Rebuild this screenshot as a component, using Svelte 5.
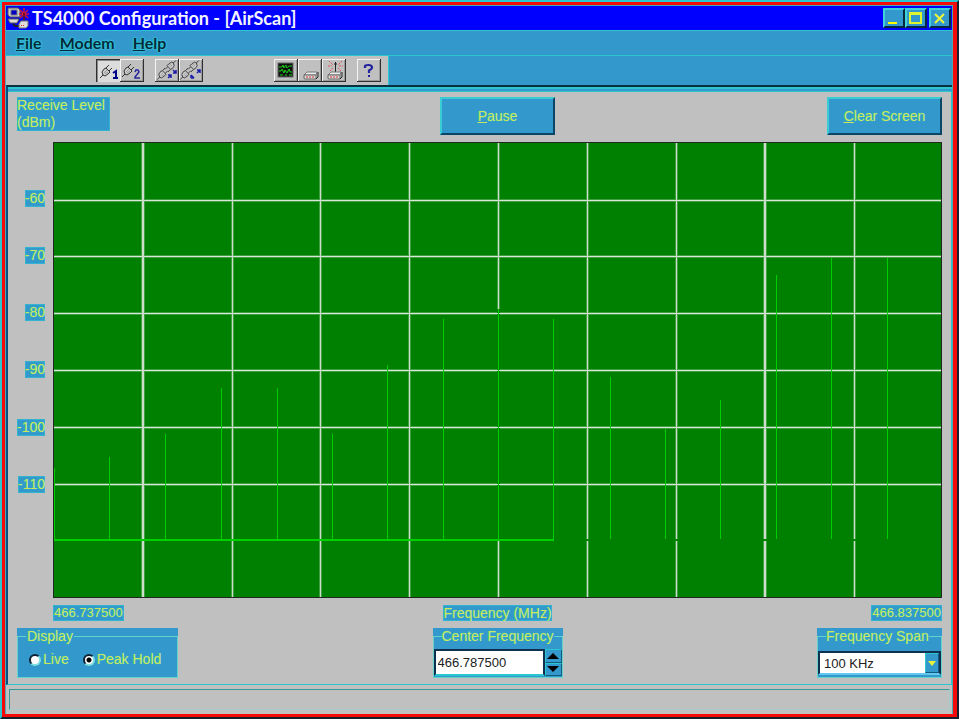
<script>
  const levels = [-60, -70, -80, -90, -100, -110];

  const gridRows = [58, 114, 171, 228, 285, 342];
  const gridColumns = [89, 179, 267, 356, 445, 534, 623, 711, 801];
  const wideColumns = [89, 711];

  const signals = [
    { x: 1, top: 326 },
    { x: 56, top: 315 },
    { x: 112, top: 292 },
    { x: 168, top: 246 },
    { x: 224, top: 246 },
    { x: 279, top: 292 },
    { x: 334, top: 223 },
    { x: 390, top: 177 },
    { x: 445, top: 167 },
    { x: 500, top: 177 },
    { x: 557, top: 235 },
    { x: 612, top: 287 },
    { x: 667, top: 258 },
    { x: 723, top: 133 },
    { x: 778, top: 116 },
    { x: 834, top: 116 },
    { x: 888, top: 235 }
  ];

  const baseline = 398;
  const sweepEnd = 501;

  let display = $state('peak');
  let centerFrequency = $state('466.787500');
  let span = $state('100 KHz');
  let port = $state(1);
  let paused = $state(false);
  let cleared = $state(false);

  function step(amount) {
    centerFrequency = (Number(centerFrequency) + amount).toFixed(6);
  }
</script>

{#snippet plug()}
  <path d="M0 13 L3 10 M6 3 L9 0 M9 6 L12 3 M4 4 L9 8" fill="none" stroke="#333" />
  <path d="M3 10 L2 7 L4 4 L6 3 L10 7 L8 9 L5 11 Z" fill="#cfcfcf" stroke="#333" />
  <path d="M4 8 L7 5 M5 9 L8 7" stroke="#999" />
{/snippet}

{#snippet modem()}
  <path d="M6 16 L9 13 H19 L18 16 Z" fill="#ededed" stroke="#777" />
  <path d="M6 16 H18 V20 H7 Q6 20 6 19 Z" fill="#d8d8d8" stroke="#666" />
  <path d="M18 20 L20 18 V13" fill="none" stroke="#222" />
  <path d="M8 18 H10 M11 18 H13 M14 18 H16" stroke="#d33" />
{/snippet}

<div class="window">
  <div class="frame">
    <header class="title-bar">
      <svg class="app-icon" width="22" height="22" viewBox="0 0 22 22" aria-hidden="true">
        <path d="M1 1 H11 L13 3 V10 H3 L1 8 Z" fill="#ccc" stroke="#555" />
        <rect x="4" y="3" width="6" height="5" fill="#0000c8" stroke="#777" />
        <path d="M1 12 H12 L10 16 H3 Z" fill="#ddd" stroke="#555" />
        <path d="M6 17 L8 19 H12" fill="none" stroke="#222" stroke-width="2" />
        <path d="M17 1 V13 M13 3 L21 11 M21 3 L13 11 M12 7 H22" stroke="#d01838" stroke-width="1.5" />
        <path d="M17 6 V15" stroke="#111" />
        <path d="M12 17 L14 14 H21 V19 L19 21 H12 Z" fill="#ddd" stroke="#777" />
        <path d="M14 18.5 H18" stroke="#d33" stroke-dasharray="1 1" />
      </svg>
      <h1>TS4000 Configuration - [AirScan]</h1>
      <div class="window-controls">
        <button class="window-button" aria-label="Minimize">
          <svg width="17" height="16" viewBox="0 0 17 16"><path d="M3 13 H12" stroke="#ff0" stroke-width="2" /></svg>
        </button>
        <button class="window-button" aria-label="Maximize">
          <svg width="17" height="16" viewBox="0 0 17 16">
            <path d="M3 3 H14 V13 H3 Z M3 4 H14" fill="none" stroke="#dff52c" stroke-width="2" />
          </svg>
        </button>
        <button class="window-button close" aria-label="Close">
          <svg width="17" height="16" viewBox="0 0 17 16"><path d="M4 4 L13 13 M13 4 L4 13" stroke="#ecf53c" stroke-width="2" /></svg>
        </button>
      </div>
    </header>

    <nav class="menu-bar">
      <button><u>F</u>ile</button>
      <button><u>M</u>odem</button>
      <button><u>H</u>elp</button>
    </nav>

    <div class="toolbar-row">
      <div class="toolbar">
        <div class="tool-group ports">
          <button class="tool" class:pressed={port === 1} aria-label="Port 1" onclick={() => (port = 1)}>
            <svg width="24" height="23" viewBox="0 0 24 23">
              <g transform="translate(4 6)">{@render plug()}</g>
              <path d="M17 14 L20 12 V19 M17 19 H22" fill="none" stroke="#00008b" stroke-width="2" />
            </svg>
          </button>
          <button class="tool" class:pressed={port === 2} aria-label="Port 2" onclick={() => (port = 2)}>
            <svg width="24" height="23" viewBox="0 0 24 23">
              <g transform="translate(2 5)">{@render plug()}</g>
              <path d="M15 13 L16 11 H18 L19 13 L15 18 V19 H20" fill="none" stroke="#2525a0" stroke-width="1.5" />
            </svg>
          </button>
        </div>
        <div class="tool-group links">
          <button class="tool" aria-label="Connect">
            <svg width="24" height="23" viewBox="0 0 24 23">
              <g transform="translate(2 9) scale(0.9)">{@render plug()}</g>
              <g transform="translate(21 1) rotate(180) translate(0 -12) scale(0.9)">{@render plug()}</g>
              <path d="M13 19 L16 16 M13 16 H16 V19 M18 11 L21 14 M21 11 V14 H18" fill="none" stroke="#1c1ca8" stroke-width="1.5" />
            </svg>
          </button>
          <button class="tool" aria-label="Disconnect">
            <svg width="24" height="23" viewBox="0 0 24 23">
              <g transform="translate(1 9) scale(0.9)">{@render plug()}</g>
              <g transform="translate(20 1) rotate(180) translate(0 -12) scale(0.9)">{@render plug()}</g>
              <path d="M12 16 L15 19 M12 19 H15 M12 16 V19 M18 14 L21 11 M18 11 H21 V14" fill="none" stroke="#1c1ca8" stroke-width="1.5" />
            </svg>
          </button>
        </div>
        <div class="tool-group devices">
          <button class="tool" aria-label="AirScan">
            <svg width="24" height="23" viewBox="0 0 24 23">
              <rect x="4" y="4" width="15" height="14" fill="#111" stroke="#666" />
              <path d="M5 8 H8 L9 6 L10 9 L12 6 L13 9 L15 7 H18 M5 12 H7 L8 10 L10 14 L11 11 L13 14 L15 10 L16 13 H18 M6 16 H9 M11 16 H13 M15 16 H18" fill="none" stroke="#16d016" />
            </svg>
          </button>
          <button class="tool" aria-label="Local modem">
            <svg width="24" height="23" viewBox="0 0 24 23">{@render modem()}</svg>
          </button>
          <button class="tool" aria-label="Remote modem">
            <svg width="24" height="23" viewBox="0 0 24 23">
              <path d="M7 2 L11 6 M20 2 L16 6 M6 7 H10 M17 7 H21 M8 12 L11 9 M19 12 L16 9" stroke="#dd5555" stroke-dasharray="2 1" />
              <path d="M13.5 3 V14 M12 5 H15" stroke="#222" />
              {@render modem()}
            </svg>
          </button>
        </div>
        <div class="tool-group">
          <button class="tool" aria-label="About">
            <svg width="24" height="23" viewBox="0 0 24 23">
              <path d="M8 9 V7 Q8 6 11.5 6 Q15 6 15 8.5 Q15 10 12 11.5 V14 M11 17 H13" fill="none" stroke="#2222a0" stroke-width="2.2" />
            </svg>
          </button>
        </div>
      </div>
    </div>

    <main>
      <div class="edge"></div>
      <div class="scan">
        <div class="tag receive-level">Receive Level<br />(dBm)</div>
        <button class="action pause" onclick={() => (paused = !paused)}><span><u>P</u>ause</span></button>
        <button class="action clear" onclick={() => (cleared = true)}><span><u>C</u>lear Screen</span></button>

        <div class="levels">
          {#each levels as level}
            <span class="tag">{level}</span>
          {/each}
        </div>

        <svg class="chart" viewBox="0 0 889 456" preserveAspectRatio="none" role="img" aria-label="Receive level by frequency">
          <rect width="889" height="456" fill="#008000" />
          {#each gridColumns as x}
            <rect x={x - 1} y="0" width={wideColumns.includes(x) ? 4 : 3} height="456" fill="#409f40" />
          {/each}
          {#each gridRows as y}
            <rect x="0" y={y - 1} width="889" height="3" fill="#409f40" />
            <rect x="0" {y} width="889" height="1" fill="#d8e8d8" />
          {/each}
          {#each gridColumns as x}
            <rect {x} y="0" width={wideColumns.includes(x) ? 2 : 1} height="456" fill="#ccdecb" />
          {/each}
          <rect x="0" y={baseline - 1} width="889" height="2" fill="#008000" />
          {#if !cleared}
            {#each signals as signal}
              {#if gridColumns.includes(signal.x)}
                <rect x={signal.x - 1} y={signal.top} width="3" height={baseline - signal.top} fill="#008000" />
                {#each gridRows.filter((y) => y > signal.top) as y}
                  <rect x={signal.x - 1} {y} width="3" height="1" fill="#d8e8d8" />
                {/each}
              {/if}
              <rect x={signal.x} y={signal.top} width="1" height={baseline - signal.top - 1} fill="#00cc00" />
            {/each}
            <rect x="0" y={baseline - 1} width={sweepEnd} height="2" fill="#00d000" />
          {/if}
          <path d="M0.5 456 V0.5 H888.5 V455.5 H0" fill="none" stroke="#202820" />
        </svg>

        <span class="tag frequency start">466.737500</span>
        <span class="tag axis-name">Frequency (MHz)</span>
        <span class="tag frequency end">466.837500</span>

        <div class="panel display">
          <fieldset>
            <legend>Display</legend>
            <div class="choices">
              <label><input type="radio" name="display" value="live" bind:group={display} />Live</label>
              <label><input type="radio" name="display" value="peak" bind:group={display} />Peak Hold</label>
            </div>
          </fieldset>
        </div>

        <div class="panel center-frequency">
          <fieldset>
            <legend><label for="center">Center Frequency</label></legend>
            <div class="spinner">
              <input id="center" type="text" bind:value={centerFrequency} />
              <div class="steps">
                <button aria-label="Increase" onclick={() => step(0.0125)}>
                  <svg width="12" height="6" viewBox="0 0 12 6"><path d="M0 6 L6 0 L12 6 Z" /></svg>
                </button>
                <button aria-label="Decrease" onclick={() => step(-0.0125)}>
                  <svg width="12" height="6" viewBox="0 0 12 6"><path d="M0 0 L6 6 L12 0 Z" /></svg>
                </button>
              </div>
            </div>
          </fieldset>
        </div>

        <div class="panel span">
          <fieldset>
            <legend><label for="span">Frequency Span</label></legend>
            <div class="picker">
              <select id="span" bind:value={span}>
                <option>100 KHz</option>
                <option>200 KHz</option>
                <option>500 KHz</option>
              </select>
              <span class="arrow" aria-hidden="true">
                <svg width="8" height="5" viewBox="0 0 8 5"><path d="M0 0 H8 L4 5 Z" fill="#e6f53c" /></svg>
              </span>
            </div>
          </fieldset>
        </div>
      </div>
    </main>

    <footer><div class="status"></div></footer>
  </div>
</div>

<style>
  :global(body) {
    margin: 0;
  }

  .window {
    --blue: #3399cc;
    --cyan: #2cc6d0;
    --grey: #c0c0c0;
    --ink: #cbe65c;
    --glow: 0 0 1px #30d8c8;
    display: flex;
    min-height: 100vh;
    box-sizing: border-box;
    border: 2px solid;
    border-color: #2cc6d0 #14202c #14202c #2cc6d0;
    background: #f50a0a;
    font: 14px/17px "Liberation Sans", Arial, sans-serif;
  }

  button, input, select {
    box-sizing: border-box;
    margin: 0;
    font: inherit;
    color: inherit;
    border-radius: 0;
  }

  svg {
    display: block;
    flex: none;
  }

  .frame {
    display: flex;
    flex-direction: column;
    flex: 1;
    min-width: 0;
    margin: 3px 4px 3px 3px;
    border: 1px solid #4ba9b4;
    border-bottom: none;
    background: var(--grey);
  }

  .title-bar {
    display: flex;
    align-items: center;
    height: 24px;
    background: #0000ff;
    color: #f4f4ff;
  }

  .app-icon {
    margin: 0 3px 0 1px;
  }

  h1 {
    flex: 1;
    margin: 0;
    font: bold 18px/24px Lato, sans-serif;
  }

  .window-controls {
    display: flex;
    padding-right: 1px;
  }

  .window-button {
    width: 22px;
    height: 20px;
    padding: 0;
    border: 2px solid;
    border-color: #3fd3d8 #06283c #06283c #3fd3d8;
    background: var(--blue);
  }

  .close {
    margin-left: 2px;
  }

  .menu-bar {
    display: flex;
    gap: 18px;
    box-sizing: border-box;
    height: 26px;
    padding-left: 10px;
    border-top: 1px solid var(--cyan);
    border-bottom: 1px solid var(--cyan);
    background: var(--blue);
    color: #06283c;
  }

  .menu-bar button {
    padding: 0;
    border: none;
    background: none;
    font: bold 16px/24px Lato, sans-serif;
    text-shadow: 0 0 2px #30e0dc, 0 0 2px #30e0dc;
  }

  .toolbar-row {
    display: flex;
    height: 29px;
    background: var(--blue);
  }

  .toolbar {
    display: flex;
    align-items: center;
    padding: 0 7px 0 90px;
    border-right: 1px solid var(--cyan);
    background: var(--grey);
  }

  .tool-group {
    display: flex;
  }

  .ports, .devices {
    margin-right: 11px;
  }

  .links {
    margin-right: 71px;
  }

  .tool {
    width: 24px;
    height: 23px;
    padding: 0;
    border: none;
    background: var(--grey);
    box-shadow: inset -1px -1px #303030, inset 1px 1px #f4f4f4, inset -2px -2px #999;
  }

  .tool.pressed {
    background: #dcdcdc;
    box-shadow: inset 1px 1px #303030, inset 2px 2px #888;
  }

  main {
    display: flex;
    flex-direction: column;
    flex: 1;
    border-top: 2px solid #0a2f40;
    border-left: 2px solid #075080;
    border-bottom: 1px solid var(--cyan);
  }

  .edge {
    height: 2px;
    border-top: 2px solid var(--cyan);
    border-bottom: 1px solid var(--cyan);
    background: var(--blue);
  }

  .scan {
    display: grid;
    grid-template-columns: 36px minmax(0, 1fr) auto minmax(0, 1fr);
    grid-template-rows: auto minmax(240px, 1fr) auto auto;
    row-gap: 7px;
    flex: 1;
    padding: 5px 9px 6px;
    border-right: 1px solid var(--cyan);
  }

  .tag {
    background: var(--blue);
    color: var(--ink);
    box-shadow: inset 0 0 0 1px #30b4d0;
    text-shadow: var(--glow);
  }

  .receive-level {
    grid-column: 1 / 3;
    justify-self: start;
    align-self: start;
    padding-right: 5px;
  }

  .action {
    justify-self: center;
    width: 115px;
    height: 38px;
    padding: 0;
    border: 2px solid;
    border-color: #38ccd4 #0a4668 #0a4668 #38ccd4;
    background: var(--blue);
    color: var(--ink);
    text-shadow: var(--glow);
  }

  .clear {
    justify-self: end;
  }

  .levels {
    display: grid;
    grid-template-rows: repeat(7, 1fr);
    align-items: center;
    justify-items: end;
    padding: 28px 9px 28px 0;
  }

  .chart {
    grid-column: 2 / -1;
    width: 100%;
    height: 100%;
    min-height: 0;
    contain: size;
    shape-rendering: crispEdges;
  }

  .frequency {
    padding: 0 1px;
    font-size: 13px;
    line-height: 16px;
  }

  .start {
    grid-column: 2;
    justify-self: start;
  }

  .axis-name {
    justify-self: center;
    line-height: 16px;
  }

  .end {
    justify-self: end;
  }

  .panel {
    display: flex;
    height: 50px;
    background: var(--blue);
    color: var(--ink);
    text-shadow: var(--glow);
  }

  fieldset {
    flex: 1;
    min-width: 0;
    margin: 0;
    padding: 0;
    border: 1px solid #62d4cc;
  }

  legend {
    margin-left: 8px;
    padding: 0 1px;
    line-height: 16px;
  }

  .display {
    grid-column: 1 / 3;
    justify-self: start;
    width: 161px;
  }

  .choices {
    display: flex;
    gap: 14px;
    padding: 7px 0 0 11px;
  }

  .choices label {
    display: flex;
    align-items: center;
    gap: 2px;
  }

  .choices input {
    appearance: none;
    width: 12px;
    height: 12px;
    border: 2px solid;
    border-color: #123 #7fe0e0 #7fe0e0 #123;
    border-radius: 50%;
    background: #fff;
  }

  .choices input:checked {
    background: radial-gradient(circle, #000 0 2px, #fff 3px);
  }

  .center-frequency {
    width: 130px;
  }

  .spinner, .picker {
    display: flex;
    color: #202020;
    text-shadow: none;
  }

  .spinner {
    height: 27px;
    padding-top: 5px;
  }

  .spinner input {
    flex: 1;
    min-width: 0;
    padding: 0 2px;
    border: 2px solid;
    border-color: #103050 #103050 var(--cyan) #103050;
    background: #fff;
    font-size: 13px;
  }

  .steps {
    display: flex;
    flex-direction: column;
    width: 17px;
  }

  .steps button {
    display: flex;
    align-items: center;
    justify-content: center;
    flex: 1;
    padding: 0;
    border: 1px solid;
    border-color: var(--cyan) #125a80 #125a80 var(--cyan);
    background: var(--blue);
  }

  .span {
    justify-self: end;
    width: 125px;
  }

  .span legend, .center-frequency legend {
    padding: 0;
  }

  .picker {
    display: grid;
    height: 24px;
    padding-top: 7px;
  }

  .picker > * {
    grid-area: 1 / 1;
  }

  select {
    appearance: none;
    width: 100%;
    padding: 0 20px 0 4px;
    border: 2px solid;
    border-color: #103050 #103050 #62c8f0 #103050;
    background: #fff;
    font-size: 13px;
  }

  .arrow {
    display: flex;
    align-items: center;
    justify-content: center;
    justify-self: end;
    width: 12px;
    margin: 2px;
    border: 1px solid;
    border-color: var(--cyan) #125a80 #125a80 var(--cyan);
    background: var(--blue);
    pointer-events: none;
  }

  footer {
    padding: 4px 2px 4px 3px;
  }

  .status {
    height: 19px;
    border: 1px solid;
    border-color: #379a9a #a4cccc #a4cccc #379a9a;
  }
</style>
